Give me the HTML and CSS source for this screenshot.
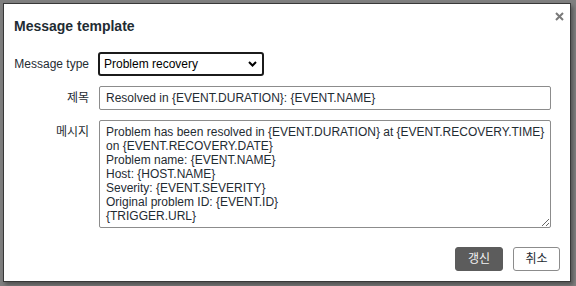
FILE: index.html
```html
<!DOCTYPE html>
<html lang="ko">
<head>
    <meta charset="UTF-8">
    <title>Message template</title>
    <link rel="stylesheet" href="styles.css">
</head>
<body>
    <div class="overlay-dialogue">
        <button class="btn-close" type="button" title="닫기">
            <svg width="9" height="9" viewBox="0 0 9 9">
                <path d="M1 1 L8 8 M8 1 L1 8" stroke="#7a7a7a" stroke-width="2"/>
            </svg>
        </button>

        <div class="dialogue-header">
            <h4>Message template</h4>
        </div>

        <form class="form-grid">
            <label class="form-label" for="message_type">Message type</label>
            <div class="form-field">
                <div class="select-wrap">
                    <select id="message_type" class="select-focused">
                        <option>Problem recovery</option>
                    </select>
                    <svg class="select-arrow" width="9" height="6" viewBox="0 0 9 6">
                        <path d="M1 1 L4.5 4.5 L8 1" fill="none" stroke="#000" stroke-width="2"/>
                    </svg>
                </div>
            </div>

            <label class="form-label" for="subject">제목</label>
            <div class="form-field">
                <input id="subject" type="text" class="text-input" value="Resolved in {EVENT.DURATION}: {EVENT.NAME}">
            </div>

            <label class="form-label" for="message">메시지</label>
            <div class="form-field">
                <textarea id="message" class="text-area" rows="7" wrap="off">Problem has been resolved in {EVENT.DURATION} at {EVENT.RECOVERY.TIME}
on {EVENT.RECOVERY.DATE}
Problem name: {EVENT.NAME}
Host: {HOST.NAME}
Severity: {EVENT.SEVERITY}
Original problem ID: {EVENT.ID}
{TRIGGER.URL}</textarea>
            </div>
        </form>

        <div class="dialogue-footer">
            <button type="button" class="btn btn-primary">갱신</button>
            <button type="button" class="btn btn-alt">취소</button>
        </div>
    </div>
</body>
</html>
```

FILE: styles.css
```css
* {
    margin: 0;
    padding: 0;
    box-sizing: border-box;
}

body {
    font-family: "Liberation Sans", Arial, "Noto Sans CJK KR", sans-serif;
    font-size: 12px;
    color: #1f2c33;
    background: #7f7f7f;
    padding: 3px 0 0 3px;
    height: 286px;
    overflow: hidden;
}

.overlay-dialogue {
    position: relative;
    width: 568px;
    height: 279px;
    background: #fff;
    border: 1px solid #383838;
    box-shadow: 2px 3px 4px rgba(0, 0, 0, 0.35);
    padding: 0 10px 10px 10px;
    display: flex;
    flex-direction: column;
}

.btn-close {
    position: absolute;
    top: 7px;
    right: 6px;
    width: 10px;
    height: 10px;
    border: none;
    background: none;
    display: flex;
    align-items: center;
    justify-content: center;
}

.dialogue-header {
    padding-top: 12px;
    margin-bottom: 16px;
}

.dialogue-header h4 {
    font-size: 14px;
    font-weight: bold;
    line-height: 20px;
    color: #1f2c33;
}

.form-grid {
    display: grid;
    grid-template-columns: 75px 1fr;
    column-gap: 10px;
    row-gap: 10px;
    align-items: start;
}

.form-label {
    text-align: right;
    line-height: 24px;
    white-space: nowrap;
}

.form-field {
    display: flex;
}

.select-wrap {
    position: relative;
    margin-left: -1px;
}

.select-focused {
    appearance: none;
    -webkit-appearance: none;
    width: 166px;
    height: 24px;
    border: 2px solid #1b1b1b;
    border-radius: 3px;
    background: #fff;
    color: #000;
    font: inherit;
    padding: 0 20px 0 4px;
    outline: none;
}

.select-arrow {
    position: absolute;
    right: 7px;
    top: 9px;
}

.text-input {
    width: 452px;
    height: 24px;
    border: 1px solid #8c8c8c;
    border-radius: 2px;
    padding: 0 6px;
    font: inherit;
    color: #1f2c33;
    background: #fff;
    outline: none;
}

.text-area {
    width: 452px;
    height: 108px;
    border: 1px solid #8c8c8c;
    border-radius: 2px;
    padding: 4px 6px;
    font: inherit;
    line-height: 14px;
    color: #1f2c33;
    background: #fff;
    overflow: hidden;
    white-space: pre;
    resize: vertical;
    outline: none;
}

.dialogue-footer {
    margin-top: auto;
    display: flex;
    justify-content: flex-end;
    gap: 10px;
}

.btn {
    height: 24px;
    min-width: 47px;
    padding: 0 11px;
    font: inherit;
    border-radius: 3px;
    line-height: 22px;
}

.btn-primary {
    min-width: 48px;
    background: #5c5c5c;
    border: 1px solid #5c5c5c;
    color: #f2f2f2;
}

.btn-alt {
    background: #fff;
    border: 1px solid #8c8c8c;
    color: #1f2c33;
}
```
